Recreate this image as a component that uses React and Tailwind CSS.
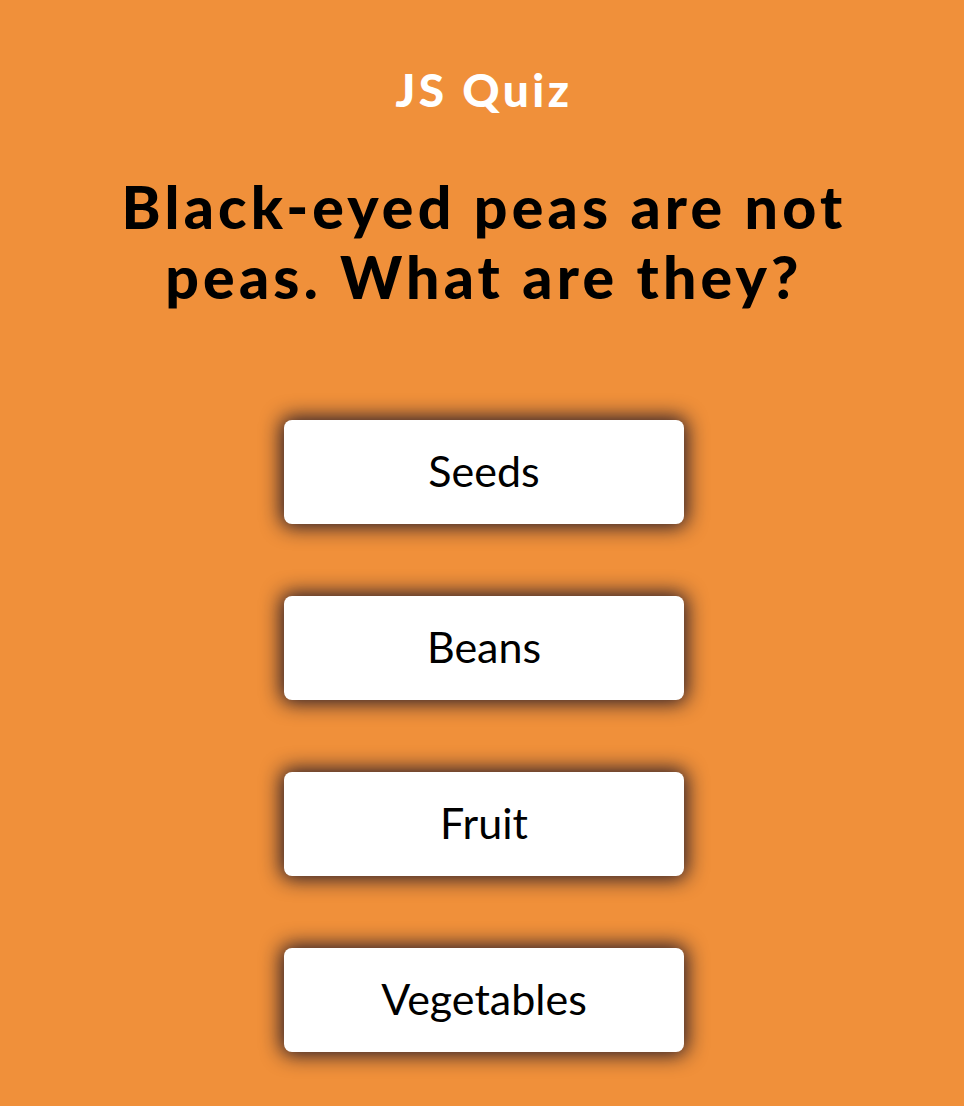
export default function App() {
  const answers = ["Seeds", "Beans", "Fruit", "Vegetables"];
  return (
    <div
      className="min-h-[1106px] w-full bg-[#f0903a] flex flex-col items-center text-center pl-[4px]"
      style={{ fontFamily: "'Gill Sans', Lato, 'Noto Sans', sans-serif" }}
    >
      <h1 className="mt-[62px] text-[46px] leading-[56px] font-black text-white tracking-[3.5px]">JS Quiz</h1>
      <h2 className="mt-[54px] text-[59px] leading-[70px] font-black text-black tracking-[4.2px] whitespace-nowrap">
        Black-eyed peas are not
        <br />
        peas. What are they?
      </h2>
      <div className="mt-[108px] flex flex-col gap-[72px]">
        {answers.map((a) => (
          <button
            key={a}
            className="w-[400px] h-[104px] pb-[4px] bg-white rounded-[8px] text-[43px] leading-none text-black shadow-[0_0_20px_3px_rgba(25,20,40,0.95)]"
          >
            {a}
          </button>
        ))}
      </div>
    </div>
  );
}
